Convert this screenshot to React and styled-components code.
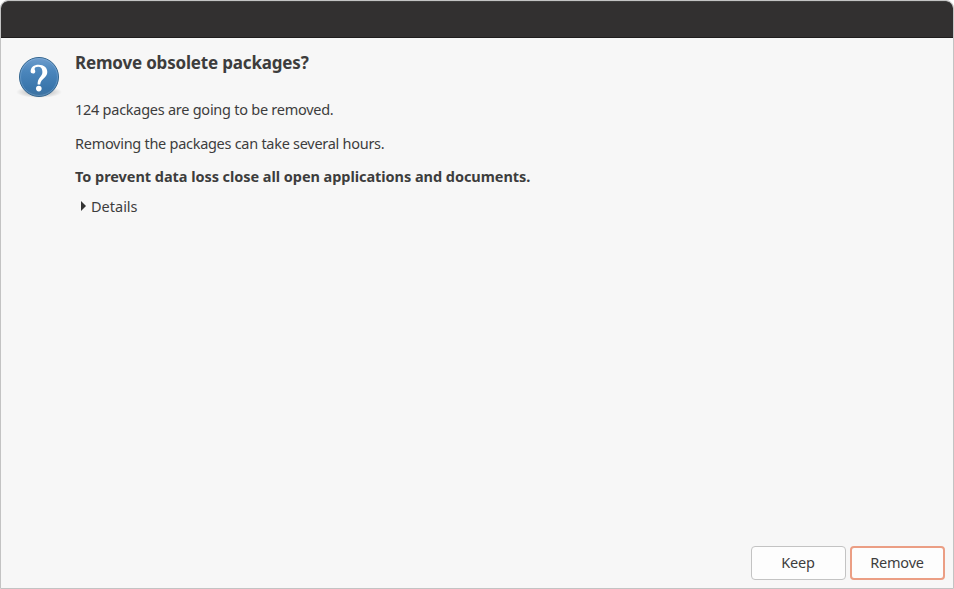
import React from "react";
import styled, { createGlobalStyle } from "styled-components";

const GlobalStyle = createGlobalStyle`
  * { box-sizing: border-box; }
  body { margin: 0; background: #fff; overflow: hidden; }
`;

const Window = styled.main`
  display: flex;
  flex-direction: column;
  width: 954px;
  height: 589px;
  overflow: hidden;
  border: 1px solid #c3c3c3;
  border-radius: 8px 8px 0 0;
  background: #f7f7f7;
  color: #3d3d3d;
  font-family: "Noto Sans", "Open Sans", sans-serif;
  font-size: 14.5px;
`;

const TitleBar = styled.header`
  flex: none;
  height: 37px;
  background: #323030;
  border-top: 1px solid #3f3e3d;
  border-bottom: 1px solid #1f1d1d;
  border-radius: 7px 7px 0 0;
`;

const Content = styled.section`
  display: flex;
  flex: 1;
  gap: 12px;
  padding: 13px 14px 0;
`;

const QuestionIcon = styled.svg`
  flex: none;
  width: 48px;
  height: 48px;
`;

const Message = styled.div`
  display: flex;
  flex-direction: column;
  align-items: flex-start;
`;

const Title = styled.h1`
  margin: 0 0 22px;
  font-size: 17px;
  font-weight: 700;
  line-height: 24px;
  letter-spacing: ${(p) => p.$spacing}px;
  white-space: nowrap;
`;

const Paragraph = styled.p`
  margin: 0 0 ${(p) => p.$gap}px;
  line-height: 24px;
  font-weight: ${(p) => (p.$strong ? 700 : 400)};
  letter-spacing: ${(p) => p.$spacing}px;
  white-space: nowrap;
`;

const Expander = styled.button`
  display: flex;
  align-items: center;
  gap: 5px;
  margin: 0;
  padding: 0 0 0 6px;
  border: 0;
  background: none;
  color: inherit;
  font: inherit;
  line-height: 24px;
  letter-spacing: 0;
`;

const Arrow = styled.svg`
  width: 5px;
  height: 10px;
`;

const Actions = styled.footer`
  display: flex;
  justify-content: flex-end;
  gap: 4px;
  padding: 0 8px 8px;
`;

const Button = styled.button`
  width: 95px;
  height: 34px;
  padding: 0 1px 3px 0;
  border: ${(p) => (p.$focused ? "2px solid #eb9e84" : "1px solid #c3c3c3")};
  border-radius: 4px;
  background: #fdfdfd;
  color: inherit;
  font: inherit;
  letter-spacing: -0.2px;
`;

export default function App() {
  return (
    <>
      <GlobalStyle />
      <Window>
        <TitleBar />
        <Content>
          <QuestionIcon viewBox="0 0 48 48" aria-hidden="true">
            <defs>
              <linearGradient id="ball" x1="0" y1="0" x2="0" y2="1">
                <stop offset="0" stopColor="#6f9dcd" />
                <stop offset="0.35" stopColor="#4b86bc" />
                <stop offset="0.8" stopColor="#3975ab" />
                <stop offset="1" stopColor="#41749f" />
              </linearGradient>
              <radialGradient id="shadow">
                <stop offset="0" stopColor="#000" stopOpacity="0.35" />
                <stop offset="1" stopColor="#000" stopOpacity="0" />
              </radialGradient>
            </defs>
            <ellipse cx="24" cy="41" rx="23" ry="6" fill="url(#shadow)" />
            <circle cx="24" cy="26" r="19.5" fill="url(#ball)" stroke="#34668f" />
            <circle cx="24" cy="26" r="18.5" fill="none" stroke="#a4c9ed" strokeOpacity="0.3" />
            <path
              d="M15.6 20.6c0-4.2 3.2-6.9 8.1-6.9 5.2 0 8.6 2.9 8.6 7.3 0 5.9-6.5 6.3-7.1 12.6h-2.6c-.3-7.3 4.8-7.6 4.8-12.6 0-3.4-1.5-5.3-4.2-5.3-2.2 0-3.6.9-3.6 2.2 0 .8.7 1.2.7 2.4 0 1.4-.9 2.3-2.2 2.3-1.5 0-2.5-.8-2.5-2Z"
              fill="#fff"
            />
            <circle cx="23.8" cy="37.6" r="2.8" fill="#fff" />
          </QuestionIcon>
          <Message>
            <Title $spacing={-0.18}>Remove obsolete packages?</Title>
            <Paragraph $gap={10} $spacing={-0.26}>124 packages are going to be removed.</Paragraph>
            <Paragraph $gap={9} $spacing={-0.28}>Removing the packages can take several hours.</Paragraph>
            <Paragraph $gap={6} $spacing={-0.05} $strong>
              To prevent data loss close all open applications and documents.
            </Paragraph>
            <Expander>
              <Arrow viewBox="0 0 5 10" aria-hidden="true">
                <path d="M0 0 5 5 0 10Z" fill="#333" />
              </Arrow>
              <span>Details</span>
            </Expander>
          </Message>
        </Content>
        <Actions>
          <Button>Keep</Button>
          <Button $focused>Remove</Button>
        </Actions>
      </Window>
    </>
  );
}
